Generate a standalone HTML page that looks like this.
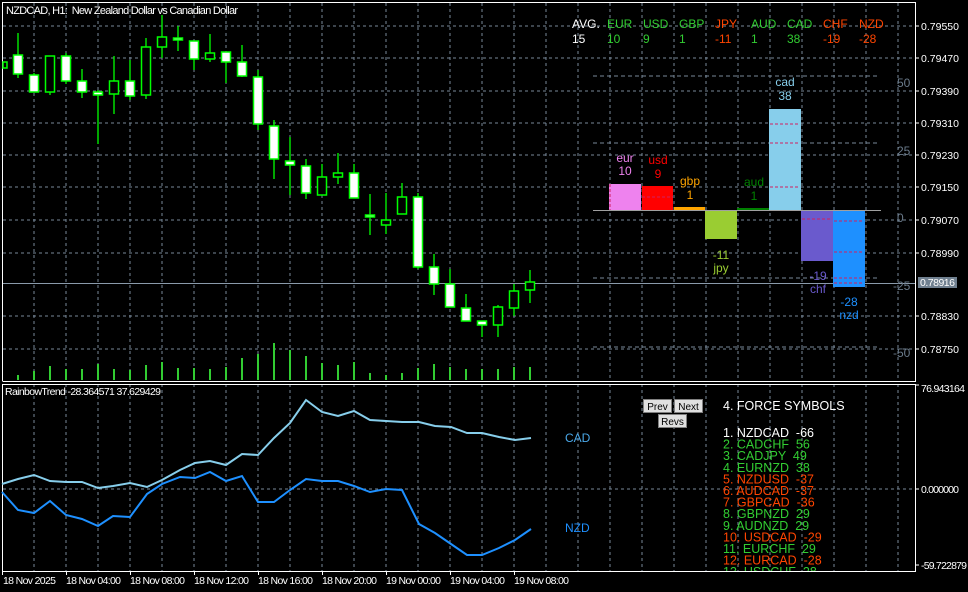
<!DOCTYPE html>
<html><head><meta charset="utf-8"><style>
html,body{margin:0;padding:0;background:#000;width:968px;height:592px;overflow:hidden}
svg{display:block}
text{font-family:"Liberation Sans",Arial,sans-serif;white-space:pre}
.ax{fill:#fff;font-size:10.5px}
.g{stroke:#778899;stroke-width:1;stroke-dasharray:3,3;fill:none}
.w{stroke:#00ff00;stroke-width:1.3}
.bw{fill:#fff;stroke:#00ff00;stroke-width:1.5}
.bb{fill:#000;stroke:#00ff00;stroke-width:1.5}
.v{stroke:#32cd32;stroke-width:2}
.fl{font-size:12.5px}
.gr{fill:#32cd32}.rd{fill:#ff4500}
.btn{fill:#e0e0e0;stroke:#808080;stroke-width:1}
</style></head><body>
<svg width="968" height="592" viewBox="0 0 968 592" xmlns="http://www.w3.org/2000/svg" xml:space="preserve">
<g class="g">
<path d="M34 3V381M66 3V381M98 3V381M130 3V381M162 3V381M194 3V381M226 3V381M258 3V381M290 3V381M322 3V381M354 3V381M386 3V381M418 3V381M450 3V381M482 3V381M514 3V381M546 3V381M578 3V381M610 3V381M642 3V381M674 3V381M706 3V381M738 3V381M770 3V381M802 3V381M834 3V381M866 3V381M898 3V381"/>
<path d="M3 26H915M3 58H915M3 91H915M3 123H915M3 155H915M3 187H915M3 220H915M3 253H915M3 316H915M3 349H915"/>
<path d="M34 384V571M66 384V571M98 384V571M130 384V571M162 384V571M194 384V571M226 384V571M258 384V571M290 384V571M322 384V571M354 384V571M386 384V571M418 384V571M450 384V571M482 384V571M514 384V571M546 384V571M578 384V571M610 384V571M642 384V571M674 384V571M706 384V571M738 384V571M770 384V571M802 384V571M834 384V571M866 384V571M898 384V571"/>
<path d="M3 489H915"/>
</g>
<path d="M3 283.5H915" stroke="#8a9aaa" stroke-width="1"/>
<path d="M2.5 381V2.5H915.5V381.5H2.5" stroke="#fff" fill="none"/>
<path d="M2.5 571V384.5H915.5V571.5H2.5" stroke="#fff" fill="none"/>
<path d="M915 26h4M915 58h4M915 91h4M915 123h4M915 155h4M915 187h4M915 220h4M915 253h4M915 316h4M915 349h4M915 385h4M915 489h4M915 565h4" stroke="#fff"/>
<g class="ax">
<text x="921" y="30" textLength="38">0.79550</text><text x="921" y="62" textLength="38">0.79470</text><text x="921" y="95" textLength="38">0.79390</text><text x="921" y="127" textLength="38">0.79310</text><text x="921" y="159" textLength="38">0.79230</text><text x="921" y="191" textLength="38">0.79150</text><text x="921" y="224" textLength="38">0.79070</text><text x="921" y="257" textLength="38">0.78990</text><text x="921" y="320" textLength="38">0.78830</text><text x="921" y="353" textLength="38">0.78750</text>
<text x="921" y="392" textLength="44">76.943164</text><text x="921" y="493" textLength="38">0.000000</text><text x="921" y="569" textLength="46">-59.722879</text>
</g>
<rect x="918" y="277" width="39" height="11" fill="#708090"/>
<text x="920" y="286" class="ax" textLength="35">0.78916</text>
<text x="6" y="14" fill="#fff" font-size="11" textLength="232">NZDCAD, H1:  New Zealand Dollar vs Canadian Dollar</text>
<g class="v"><path d="M18 380V375M34 380V371M50 380V366M66 380V369M82 380V369M98 380V364M114 380V369M130 380V370M146 380V365M162 380V362M178 380V368M194 380V368M210 380V369M226 380V367M242 380V358M258 380V354M274 380V343M290 380V350M306 380V356M322 380V363M338 380V365M354 380V362M370 380V373M386 380V375M402 380V373M418 380V368M434 380V364M450 380V367M466 380V369M482 380V369M498 380V369M514 380V367M530 380V367"/></g>
<g class="w"><path d="M18 33V78M34 73V92M50 56V95M66 53V84M82 69V98M98 90V144M114 56V114M130 60V100M146 38V99M162 15V58M178 26V51M194 41V70M210 34V62M226 52V83M242 45V77M258 70V130M274 120V179M290 137V195M306 159V199M322 164V195M338 153V184M354 164V198M370 194V235M386 193V234M402 183V214M418 193V269M434 254V295M450 269V307M466 294V321M482 321V337M498 305V337M514 284V316M530 270V303"/></g>
<rect x="3" y="62" width="4" height="6" class="bb"/>
<rect x="13.5" y="55" width="9" height="19" class="bw"/>
<rect x="29.5" y="75" width="9" height="17" class="bw"/>
<rect x="45.5" y="56" width="9" height="36" class="bb"/>
<rect x="61.5" y="56" width="9" height="25" class="bw"/>
<rect x="77.5" y="81" width="9" height="11" class="bw"/>
<rect x="93.5" y="92" width="9" height="3" class="bw"/>
<rect x="109.5" y="81" width="9" height="13" class="bb"/>
<rect x="125.5" y="81" width="9" height="15" class="bw"/>
<rect x="141.5" y="47" width="9" height="48" class="bb"/>
<rect x="157.5" y="37" width="9" height="10" class="bb"/>
<rect x="173.5" y="38" width="9" height="2" class="bw"/>
<rect x="189.5" y="41" width="9" height="18" class="bw"/>
<rect x="205.5" y="53" width="9" height="6" class="bb"/>
<rect x="221.5" y="52" width="9" height="10" class="bw"/>
<rect x="237.5" y="62" width="9" height="14" class="bw"/>
<rect x="253.5" y="77" width="9" height="47" class="bw"/>
<rect x="269.5" y="126" width="9" height="33" class="bw"/>
<rect x="285.5" y="161" width="9" height="4" class="bw"/>
<rect x="301.5" y="166" width="9" height="27" class="bw"/>
<rect x="317.5" y="177" width="9" height="18" class="bb"/>
<rect x="333.5" y="173" width="9" height="4" class="bb"/>
<rect x="349.5" y="173" width="9" height="25" class="bw"/>
<rect x="365.5" y="215" width="9" height="2" class="bw"/>
<rect x="381.5" y="220" width="9" height="5" class="bb"/>
<rect x="397.5" y="197" width="9" height="17" class="bb"/>
<rect x="413.5" y="197" width="9" height="70" class="bw"/>
<rect x="429.5" y="267" width="9" height="17" class="bw"/>
<rect x="445.5" y="284" width="9" height="23" class="bw"/>
<rect x="461.5" y="308" width="9" height="13" class="bw"/>
<rect x="477.5" y="321" width="9" height="4" class="bw"/>
<rect x="493.5" y="307" width="9" height="18" class="bb"/>
<rect x="509.5" y="291" width="9" height="17" class="bb"/>
<rect x="525.5" y="282" width="9" height="8" class="bb"/>

<g font-size="12">
<text x="572" y="28" fill="#fff">AVG.</text><text x="572" y="43" fill="#fff">15</text>
<text x="607" y="28" class="gr">EUR</text><text x="607" y="43" class="gr">10</text>
<text x="643" y="28" class="gr">USD</text><text x="643" y="43" class="gr">9</text>
<text x="679" y="28" class="gr">GBP</text><text x="679" y="43" class="gr">1</text>
<text x="715" y="28" class="rd">JPY</text><text x="715" y="43" class="rd">-11</text>
<text x="751" y="28" class="gr">AUD</text><text x="751" y="43" class="gr">1</text>
<text x="787" y="28" class="gr">CAD</text><text x="787" y="43" class="gr">38</text>
<text x="823" y="28" class="rd">CHF</text><text x="823" y="43" class="rd">-19</text>
<text x="859" y="28" class="rd">NZD</text><text x="859" y="43" class="rd">-28</text>
</g>
<path d="M593 76H878M593 143H878M593 278H878M593 347H878" stroke="#778899" stroke-dasharray="4,3"/>
<g font-size="12" fill="#6a7a8a">
<text x="897" y="87">50</text><text x="897" y="155">25</text><text x="897" y="222">0</text><text x="893" y="290">-25</text><text x="893" y="357">-50</text>
</g>
<rect x="609" y="184" width="32" height="26" fill="#ee82ee"/>
<rect x="642" y="186" width="31" height="24" fill="#ff0000"/>
<rect x="674" y="207" width="31" height="3" fill="#ffa500"/>
<rect x="705" y="210" width="32" height="29" fill="#9acd32"/>
<rect x="737" y="208" width="32" height="2" fill="#008000"/>
<rect x="769" y="109" width="32" height="101" fill="#87ceeb"/>
<rect x="801" y="210" width="32" height="51" fill="#6a5acd"/>
<rect x="833" y="210" width="32" height="77" fill="#1e90ff"/>
<path d="M610 184V210M642 197H673M770 124H800M770 143H800M770 187H800M834 221H864M834 252H864M834 278H864M834 283H864M802 219H832" stroke="#d02060" stroke-dasharray="3,2"/>
<path d="M593 210.5H881" stroke="#a0a0a0"/>
<g font-size="12" text-anchor="middle">
<text x="625" y="162" fill="#ee82ee">eur</text><text x="625" y="175" fill="#ee82ee">10</text>
<text x="658" y="164" fill="#ff0000">usd</text><text x="658" y="178" fill="#ff0000">9</text>
<text x="690" y="185" fill="#ffa500">gbp</text><text x="690" y="199" fill="#ffa500">1</text>
<text x="754" y="186" fill="#008000">aud</text><text x="754" y="200" fill="#008000">1</text>
<text x="785" y="86" fill="#87ceeb">cad</text><text x="785" y="100" fill="#87ceeb">38</text>
<text x="721" y="259" fill="#9acd32">-11</text><text x="721" y="272" fill="#9acd32">jpy</text>
<text x="818" y="280" fill="#6a5acd">-19</text><text x="818" y="293" fill="#6a5acd">chf</text>
<text x="849" y="306" fill="#1e90ff">-28</text><text x="849" y="319" fill="#1e90ff">nzd</text>
</g>

<text x="5" y="395" fill="#fff" font-size="10.5" textLength="156">RainbowTrend -28.364571 37.629429</text>
<polyline fill="none" stroke="#87ceeb" stroke-width="2" points="2,484 18,479 34,475 50,481 66,482 82,482 98,488 113,486 130,483 147,487 162,480 180,470 195,463 210,461 226,465 242,454 258,455 274,438 290,423 306,400 322,412 338,416 354,411 370,420 386,421 402,422 419,422 435,426 451,427 467,433 482,433 499,437 515,440 531,438"/>
<polyline fill="none" stroke="#1e90ff" stroke-width="2" points="2,492 18,510 34,513 50,501 66,515 82,519 98,526 113,516 130,517 147,494 162,484 180,477 195,478 210,472 226,481 242,476 258,502 274,502 290,490 306,479 322,481 338,481 354,486 370,492 386,489 402,490 419,524 435,533 451,544 467,555 482,555 499,548 515,540 531,529"/>
<text x="565" y="442" fill="#4aa8e8" font-size="12">CAD</text>
<text x="565" y="532" fill="#1e90ff" font-size="12">NZD</text>

<rect x="643.5" y="399.5" width="28" height="13" class="btn"/><text x="657.5" y="410" font-size="10" text-anchor="middle">Prev</text>
<rect x="674.5" y="399.5" width="28" height="13" class="btn"/><text x="688.5" y="410" font-size="10" text-anchor="middle">Next</text>
<rect x="658.5" y="414.5" width="28" height="13" class="btn"/><text x="672.5" y="425" font-size="10" text-anchor="middle">Revs</text>

<text x="723" y="410" fill="#fff" font-size="12.5">4. FORCE SYMBOLS</text>
<svg x="0" y="0" width="915" height="571">
<g class="fl">
<text x="723" y="437" fill="#fff">1. NZDCAD  -66</text>
<text x="723" y="448.6" class="gr">2. CADCHF  56</text>
<text x="723" y="460.2" class="gr">3. CADJPY  49</text>
<text x="723" y="471.8" class="gr">4. EURNZD  38</text>
<text x="723" y="483.4" class="rd">5. NZDUSD  -37</text>
<text x="723" y="495" class="rd">6. AUDCAD  -37</text>
<text x="723" y="506.6" class="rd">7. GBPCAD  -36</text>
<text x="723" y="518.2" class="gr">8. GBPNZD  29</text>
<text x="723" y="529.8" class="gr">9. AUDNZD  29</text>
<text x="723" y="541.4" class="rd">10. USDCAD  -29</text>
<text x="723" y="553" class="gr">11. EURCHF  29</text>
<text x="723" y="564.6" class="rd">12. EURCAD  -28</text>
<text x="723" y="576.2" class="gr">13. USDCHF  28</text>
</g>
</svg>

<path d="M2.5 571v4M66.5 571v4M130.5 571v4M194.5 571v4M258.5 571v4M322.5 571v4M386.5 571v4M450.5 571v4M514.5 571v4" stroke="#fff"/>
<g class="ax">
<text x="3" y="584" textLength="53">18 Nov 2025</text><text x="66" y="584" textLength="55">18 Nov 04:00</text><text x="130" y="584" textLength="55">18 Nov 08:00</text><text x="194" y="584" textLength="55">18 Nov 12:00</text><text x="258" y="584" textLength="55">18 Nov 16:00</text><text x="322" y="584" textLength="55">18 Nov 20:00</text><text x="386" y="584" textLength="55">19 Nov 00:00</text><text x="450" y="584" textLength="55">19 Nov 04:00</text><text x="514" y="584" textLength="55">19 Nov 08:00</text>
</g>
</svg>
</body></html>
